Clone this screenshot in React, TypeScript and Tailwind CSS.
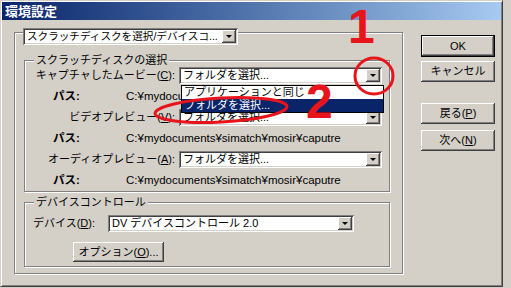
import React from 'react';

const FONT = { fontFamily: '"Liberation Sans", "Noto Sans CJK JP", sans-serif' };

const raised =
  'bg-[#d4d0c8] shadow-[inset_-1px_-1px_0_#404040,inset_1px_1px_0_#fff,inset_-2px_-2px_0_#808080,inset_2px_2px_0_#d4d0c8]';
const sunken =
  'bg-white shadow-[inset_1px_1px_0_#808080,inset_-1px_-1px_0_#fff,inset_2px_2px_0_#404040,inset_-2px_-2px_0_#d4d0c8]';
const etched = 'border border-[#808080] shadow-[1px_1px_0_#fff,inset_1px_1px_0_#fff]';

const Combo: React.FC<{ text: string; className?: string; textClass?: string }> = ({ text, className, textClass }) => (
  <div className={`flex h-[17px] items-center p-[2px] ${sunken} ${className || ''}`}>
    <span className={`flex-1 overflow-hidden whitespace-nowrap pl-[2px] leading-[13px] text-black ${textClass || 'text-[11px]'}`}>
      {text}
    </span>
    <div className={`flex h-[13px] w-[14px] shrink-0 items-center justify-center ${raised}`}>
      <div className="h-0 w-0 border-x-[3px] border-t-[3px] border-x-transparent border-t-black" />
    </div>
  </div>
);

const Btn: React.FC<{ children: React.ReactNode; def?: boolean; className?: string }> = ({ children, def, className }) => (
  <div className={`${def ? 'border border-black' : ''} ${className || ''}`}>
    <div className={`flex h-full w-full items-center justify-center text-[11px] text-black ${raised}`}>{children}</div>
  </div>
);

const U: React.FC<{ children: React.ReactNode }> = ({ children }) => <span className="underline">{children}</span>;

const ComboRow: React.FC<{ label: React.ReactNode; text: string }> = ({ label, text }) => (
  <div className="flex h-[17px] items-center">
    <div className="w-[150px] text-right text-[11px] text-black">{label}</div>
    <Combo text={text} className="ml-[4px] w-[203px]" />
  </div>
);

const PathRow: React.FC = () => (
  <div className="flex h-[25px] items-center text-[11.5px] text-black">
    <span className="ml-[28px] w-[73px] font-bold">パス:</span>
    <span>C:¥mydocuments¥simatch¥mosir¥caputre</span>
  </div>
);

export default function App() {
  return (
    <div className="relative h-[288px] w-[511px] overflow-hidden bg-[#d4d0c8]" style={FONT}>
      <div className="h-[287px] w-[503px] border border-[#d4d0c8] border-b-[#404040] border-r-[#404040] p-[1px] shadow-[inset_1px_1px_0_#fff,inset_-1px_-1px_0_#808080]">
        <div className="flex h-[18px] items-center bg-gradient-to-r from-[#0a246a] to-[#a6caf0] pl-[3px]">
          <span className="text-[13px] font-bold leading-none text-white">環境設定</span>
        </div>

        <div className="flex">
          {/* outer group */}
          <div className={`ml-[12px] mt-[12px] h-[242px] w-[389px] ${etched}`}>
            <Combo
              text="スクラッチディスクを選択/デバイスコ..."
              className="-mt-[5px] ml-[8px] w-[215px]"
              textClass="text-[10.6px]"
            />

            <div className={`ml-[9px] mt-[15px] h-[132px] w-[366px] ${etched}`}>
              <div className="-mt-[8px] ml-[9px] w-fit bg-[#d4d0c8] px-[2px] text-[11px] leading-[14px] text-black">
                スクラッチディスクの選択
              </div>
              <ComboRow label={<>キャプチャしたムービー(<U>C</U>):</>} text="フォルダを選択..." />
              <PathRow />
              <ComboRow label={<>ビデオプレビュー(<U>V</U>):</>} text="フォルダを選択..." />
              <PathRow />
              <ComboRow label={<>オーディオプレビュー(<U>A</U>):</>} text="フォルダを選択..." />
              <PathRow />
            </div>

            <div className={`ml-[9px] mt-[10px] h-[65px] w-[366px] ${etched}`}>
              <div className="-mt-[8px] ml-[9px] w-fit bg-[#d4d0c8] px-[2px] text-[11px] leading-[14px] text-black">
                デバイスコントロール
              </div>
              <div className="mt-[6px] flex h-[17px] items-center">
                <span className="ml-[8px] w-[75px] text-[11px] text-black">
                  デバイス(<U>D</U>):
                </span>
                <Combo text="DV デバイスコントロール 2.0" className="w-[246px]" />
              </div>
              <Btn className="ml-[48px] mt-[10px] h-[20px] w-[91px]">
                オプション(<U>O</U>)...
              </Btn>
            </div>
          </div>

          {/* buttons */}
          <div className="ml-[18px] mt-[15px] flex w-[74px] flex-col">
            <Btn def className="h-[22px]">OK</Btn>
            <Btn className="mt-[4px] h-[21px]">キャンセル</Btn>
            <Btn className="mt-[21px] h-[21px]">
              戻る(<U>P</U>)
            </Btn>
            <Btn className="mt-[6px] h-[21px]">
              次へ(<U>N</U>)
            </Btn>
          </div>
        </div>
      </div>

      {/* open dropdown list */}
      <div className="absolute left-[181px] top-[85px] w-[203px] border border-black bg-white text-[11px] leading-[13px]">
        <div className="h-[13px] overflow-hidden pl-[2px] text-black">アプリケーションと同じ</div>
        <div className="h-[13px] overflow-hidden bg-[#0a246a] pl-[2px] text-white">フォルダを選択...</div>
      </div>

      {/* red annotations */}
      <svg className="pointer-events-none absolute left-0 top-0" width="511" height="288">
        <ellipse cx="374" cy="76" rx="19" ry="18" fill="none" stroke="#e8141c" strokeWidth="3" />
        <ellipse cx="221" cy="110" rx="66" ry="12" fill="none" stroke="#e8141c" strokeWidth="3" transform="rotate(-3 221 110)" />
      </svg>
      <div className="absolute left-[348px] top-[2px] text-[48px] font-bold leading-[50px] text-[#e8141c]">1</div>
      <div className="absolute left-[306px] top-[77px] text-[48px] font-bold leading-[50px] text-[#e8141c]">2</div>
    </div>
  );
}
